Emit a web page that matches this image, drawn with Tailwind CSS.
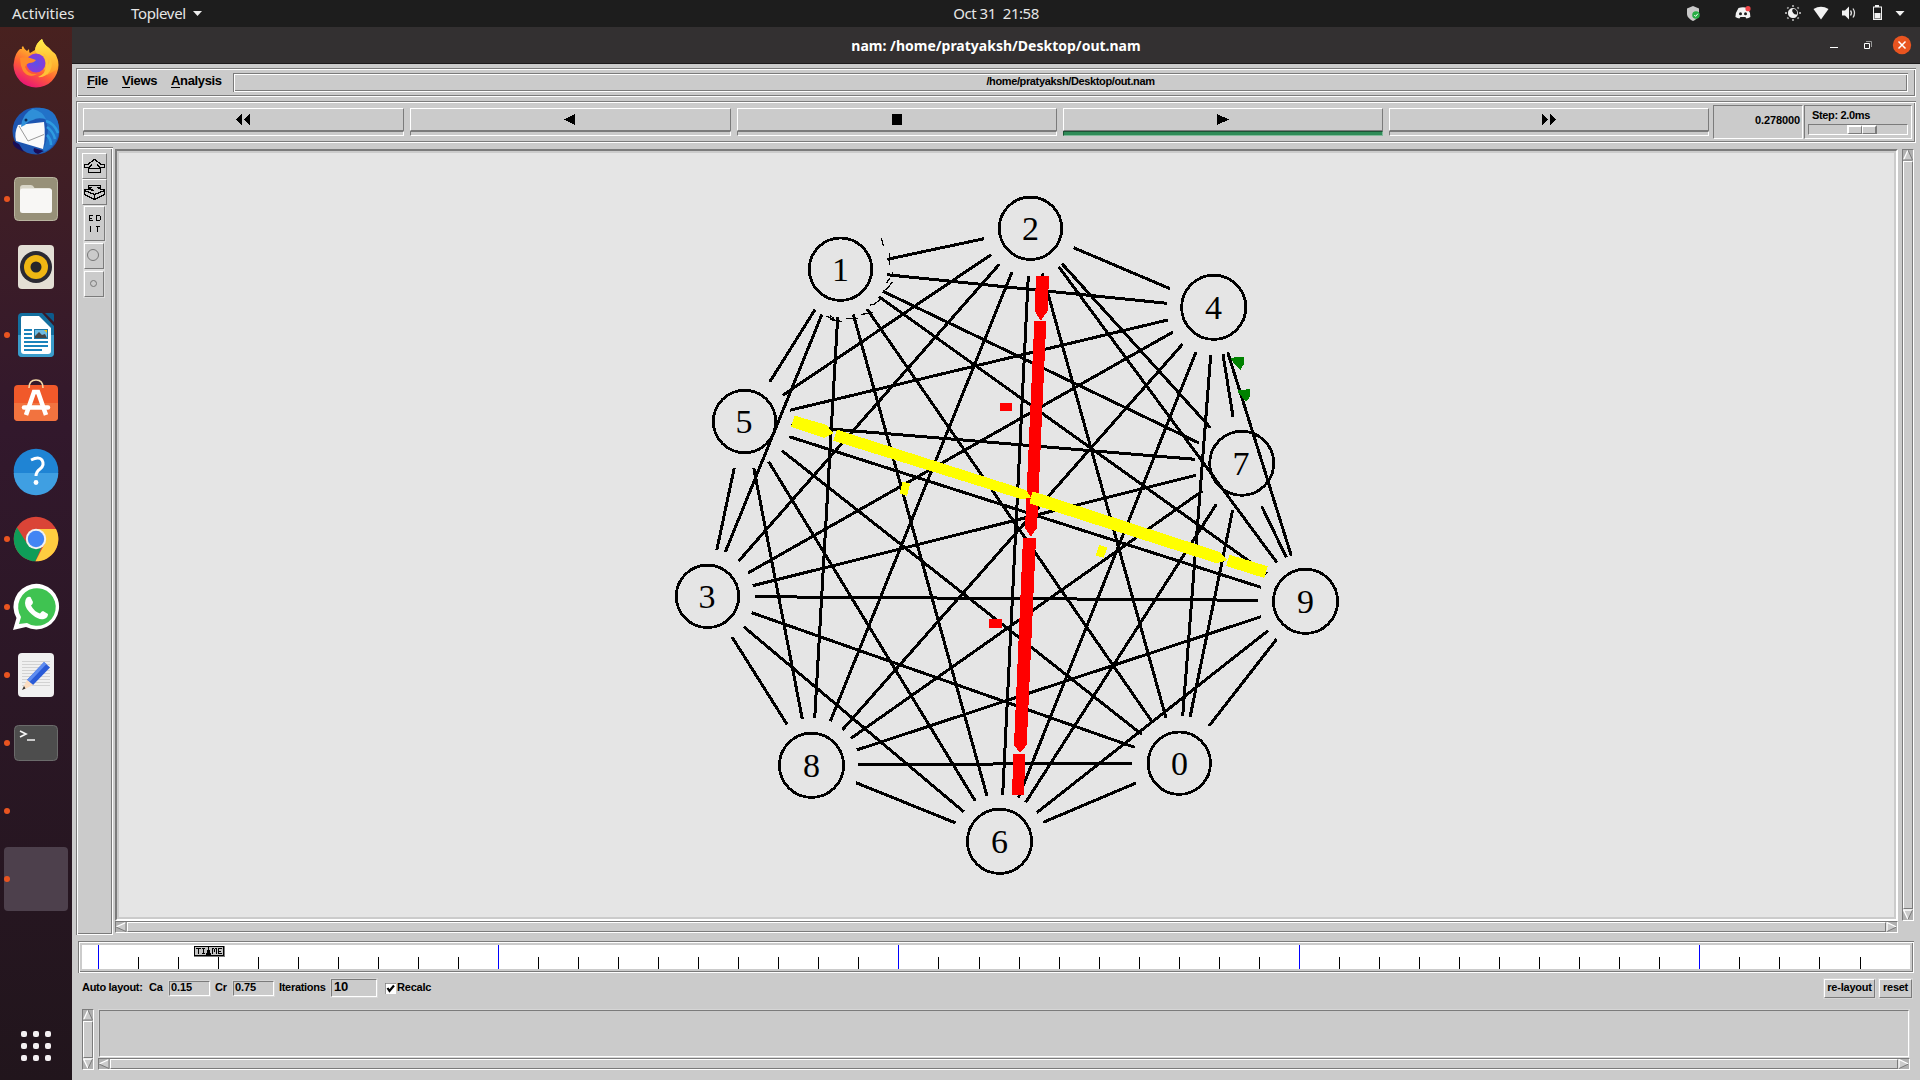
<!DOCTYPE html>
<html lang="en">
<head>
<meta charset="utf-8">
<title>nam</title>
<script src="https://cdn.jsdelivr.net/npm/@tailwindcss/browser@4"></script>
</head>
<body class="w-[1920px] h-[1080px] overflow-hidden bg-[#cbcbcb] flex flex-col font-['Liberation_Sans',Arial,sans-serif] text-black">

<!-- GNOME top bar -->
<header class="h-[27px] shrink-0 bg-[#1d1d1d] text-[#e6e6e6] font-['Noto_Sans',sans-serif] text-[15px] leading-[27px] grid grid-cols-3">
  <div class="flex pl-3">
    <span class="w-[119px]">Activities</span>
    <span class="tracking-[-0.35px] w-[62px]">Toplevel</span>
    <svg class="w-[10px] h-[27px]" viewBox="0 0 10 27"><path d="M0 11h9l-4.500 5z" fill="#eee"/></svg>
  </div>
  <div class="flex justify-center pl-[72px] whitespace-pre tracking-[-0.45px]">Oct 31  21:58</div>
  <svg class="w-[240px] h-[27px] justify-self-end" viewBox="1680 0 240 27" fill="#f2f2f2">
    <path d="M1693 6l6 2.500v5.500c0 3-3 5.500-6 7c-3-1.500-6-4-6-7V8.500z" fill="#c9c9c9"/>
    <circle cx="1696" cy="15" r="3.800" fill="#27ae45"/><path d="M1694.300 15l1.300 1.400l2.300-2.700" fill="none" stroke="#fff"/>
    <path d="M1738.500 8q4.500-1.600 9 0q3 4.500 2.900 9q-2 1.400-4 1.400l-1-1.400h-5l-1 1.400q-2 0-4-1.400q0-4.500 3.100-9z"/>
    <circle cx="1740.500" cy="13.700" r="1.500" fill="#1d1d1d"/><circle cx="1745.500" cy="13.700" r="1.500" fill="#1d1d1d"/><circle cx="1748" cy="8.700" r="2.600" fill="#ed4245"/>
    <g fill="none" stroke="#a5a5a5" stroke-width="1.800"><path d="M1793 5v2M1793 19v2M1785 13h2M1799 13h2M1787.300 7.300l1.200 1.200M1797.500 17.500l1.200 1.200M1798.700 7.300l-1.200 1.200M1787.300 18.700l1.200-1.200"/></g>
    <circle cx="1793" cy="13" r="4.600" fill="none" stroke="#ccc"/><path d="M1793 8.200a4.800 4.800 0 1 0 4.700 6a4 4 0 0 1-4.700-6z"/>
    <path d="M1813.500 9q7.500-4.500 15 0l-7.500 10.500z"/>
    <path d="M1842 10.500h3l4-4v13l-4-4h-3z"/><path d="M1850.500 10.500q2 2.500 0 5M1853 8.500q3 4.500 0 9" fill="none" stroke="#ddd" stroke-width="1.300"/>
    <path d="M1874.500 5h4v1.500h3v13.500h-9v-13.500h2z" transform="translate(.5 0)"/><path d="M1874 7.500h7v11h-7z" fill="#1d1d1d"/><path d="M1874.500 13h6v5h-6z"/>
    <path d="M1895.500 11h9l-4.500 5z"/>
  </svg>
</header>

<div class="flex flex-1 min-h-0">
  <!-- Dock -->
  <nav class="w-[72px] shrink-0 bg-linear-to-b from-[#48211f] via-[#32182c] via-38% to-[#21151c] flex flex-col gap-1 pt-1 px-1">
    <svg class="size-16" viewBox="0 0 64 64">
      <defs>
        <linearGradient id="ff" x1="0.800" y1="0" x2="0.300" y2="1"><stop offset="0" stop-color="#fff44f"/><stop offset=".35" stop-color="#ffb22b"/><stop offset=".65" stop-color="#ff5f35"/><stop offset="1" stop-color="#e8107a"/></linearGradient>
        <linearGradient id="ffy" x1="0" y1="0" x2="0" y2="1"><stop offset="0" stop-color="#fff04a"/><stop offset="1" stop-color="#ff9a26"/></linearGradient>
        <radialGradient id="ffp"><stop offset="0" stop-color="#5b50e8"/><stop offset="1" stop-color="#8a3bd8"/></radialGradient>
      </defs>
      <path d="M10 31q1-9 6-13l2 0q-1-2 1-3q1 3 4 5l2-2q0 3 1 4l5-3q1-7 7-11q2 6 7 9l3 4q4 1 4 5q3 4 2.500 8a22.500 22.500 0 0 1-45 0z" fill="url(#ff)"/>
      <path d="M31 19q1-7 7-11q2 6 7 9l7 7q4 8 0 15l-9 5z" fill="url(#ffy)"/>
      <circle cx="32" cy="32" r="9.500" fill="url(#ffp)"/>
      <path d="M16 27q7-2 16 2q-2 3-7 3q-3 1-4 4q3 8 12 7q-8 5-14-3q-3-6-3-13z" fill="#ff8a2a"/>
      <path d="M39 22q6 3 5 12q3-4 1-10q5 9 1 16q-5 7-12 6q8-3 8-12q0-8-3-12z" fill="#ffc238"/>
    </svg>
    <svg class="size-16" viewBox="0 0 64 64">
      <circle cx="32" cy="32" r="23.500" fill="#1d55b0"/>
      <path d="M27 10q16-4 24 6q7 12 2 24q-5 11-16 14q7-12 7-25q-2-10-9-14z" fill="#2272c8"/>
      <path d="M42 22q8 2 12 12M43 28q6 4 8 12M43 36q4 4 4 10" stroke="#2e9be0" stroke-width="2.500" fill="none"/>
      <path d="M9 42q-2 6 11 11l-5-8zM30 49q-2 4 4 6l6-3z" fill="#1a0d57"/>
      <path d="M14 26l26 -3q2 15-1 27l-27-8q-2-8 2-16z" fill="#fafafa"/>
      <path d="M15 27l9 15l16-6.500" fill="none" stroke="#999"/>
      <path d="M17 28q1-14 13-19l-1 1q9 2 13 10q-9-2-13 1q-5 1-8 5z" fill="#2f8fd8"/>
      <circle cx="22" cy="21" r="1.500" fill="#0b2c5c"/>
    </svg>
    <div class="relative size-16"><i class="absolute left-0 top-[29px] size-[6px] rounded-full bg-[#e95420]"></i>
      <svg class="size-16" viewBox="0 0 64 64"><rect x="10.500" y="10.500" width="43" height="43" rx="4" fill="#979078" stroke="#b9b5a0"/><path d="M16 21q0-3 3-3h8q2 0 3.500 3h14q3 0 3 3v3H16z" fill="#d9d6c8"/><rect x="16" y="21.500" width="32" height="24.500" rx="2.500" fill="#f8f7f5"/></svg></div>
    <svg class="size-16" viewBox="0 0 64 64"><rect x="14" y="10" width="36" height="44" rx="4" fill="#e3dfd5"/><circle cx="32" cy="32" r="16" fill="#2a2a33"/><circle cx="32" cy="32" r="12" fill="#efb713"/><circle cx="32" cy="32" r="5.500" fill="#26262a"/></svg>
    <div class="relative size-16"><i class="absolute left-0 top-[29px] size-[6px] rounded-full bg-[#e95420]"></i>
      <svg class="size-16" viewBox="0 0 64 64"><path d="M18 10h20l12 13v27q0 4-4 4H18q-4 0-4-4V14q0-4 4-4z" fill="#136f9f"/><path d="M14 32h36v18q0 4-4 4H18q-4 0-4-4z" fill="#3a9cca"/><path d="M18.500 13H35l12 12v23q0 3-3 3H20q-3 0-3-3V15q0-2 1.500-2z" fill="#fff"/><path d="M41 10h7q2 0 2 2v7z" fill="#0c5a8c"/>
      <path d="M20 27h8M20 31h8M20 35h8M20 39h24M20 43h24M20 47h18" stroke="#1a82bb" stroke-width="2"/><rect x="30" y="26" width="14" height="10" fill="#1a75a5"/><path d="M31 27h12v8H31z" fill="#6dbbe4"/><path d="M31 35v-2l4-4l3 3l3-1l2 4z" fill="#444"/><path d="M40 27h3v3z" fill="#f5c211"/></svg></div>
    <svg class="size-16" viewBox="0 0 64 64"><rect x="10" y="14" width="44" height="36" rx="4" fill="#f1592a"/><path d="M10 32h44v14q0 4-4 4H14q-4 0-4-4z" fill="#f2733f"/><path d="M25 17q0-8 7-8t7 8" fill="none" stroke="#f5d9a8" stroke-width="1.600"/><path d="M22 44l8-23h4l8 23" fill="none" stroke="#fff" stroke-width="4.500"/><path d="M20 36.500h24" stroke="#fff" stroke-width="4.500" stroke-linecap="round"/></svg>
    <svg class="size-16" viewBox="0 0 64 64"><circle cx="32" cy="32" r="22.300" fill="#1f84d4"/><path d="M9.700 34a22.300 22.300 0 0 0 44.600 0z" fill="#3f9fe2"/><path d="M27 21q8-4 11 0q3 5-2 9q-4 3-4 7" fill="none" stroke="#fff" stroke-width="3"/><circle cx="32" cy="43.500" r="2.400" fill="#fff"/></svg>
    <div class="relative size-16"><i class="absolute left-0 top-[29px] size-[6px] rounded-full bg-[#e95420]"></i>
      <svg class="size-16" viewBox="0 0 64 64"><circle cx="32" cy="32" r="22.300" fill="#da4437"/><path d="M13 20.500L23.300 37l8.700 5l5.500-2l-6 14.300A22.300 22.300 0 0 1 13 20.500z" fill="#0f9d58"/><path d="M32 22h20a22.300 22.300 0 0 1-20.500 32.300L41 36z" fill="#ffcd40"/><circle cx="32" cy="32" r="10.200" fill="#f1f1f1"/><circle cx="32" cy="32" r="8.200" fill="#4285f4"/></svg></div>
    <div class="relative size-16"><i class="absolute left-0 top-[29px] size-[6px] rounded-full bg-[#e95420]"></i>
      <svg class="size-16" viewBox="0 0 64 64"><path d="M9 55l3.500-12A22.800 22.800 0 1 1 22 52z" fill="#fff"/><path d="M15 49l2-7A18.800 18.800 0 1 1 23 48z" fill="#3fc351"/><path d="M22.500 23q2-2 4-1l2.500 5q0 2-2 3.500q3 6 9 8q1.500-2.500 3-2.500l5 3q0 4-4 5q-5 1.500-12-4.500t-7-11.500q0-3 1.500-5z" fill="#fff"/></svg></div>
    <div class="relative size-16"><i class="absolute left-0 top-[29px] size-[6px] rounded-full bg-[#e95420]"></i>
      <svg class="size-16" viewBox="0 0 64 64"><rect x="14" y="10" width="36" height="44" rx="4" fill="#f0f0f0"/><path d="M18 18.500h28M18 21.500h28M18 24.500h28M18 27.500h28M18 30.500h28M18 33.500h28M18 36.500h28M18 39.500h28M18 42.500h28" stroke="#d2d2d2"/><path d="M40 19l6 5.500L29 42l-6-5z" fill="#2a5bd7"/><path d="M40 19l2.500 2L25.500 39l-2.500-2z" fill="#5f8df0"/><path d="M23 37l6 5l-9 4.500l-1.500-1z" fill="#fbdcc0"/><path d="M20 43l1.500 2.500l-3.500 1.500z" fill="#333"/></svg></div>
    <div class="relative size-16"><i class="absolute left-0 top-[29px] size-[6px] rounded-full bg-[#e95420]"></i>
      <svg class="size-16" viewBox="0 0 64 64"><rect x="10.500" y="14.500" width="43" height="35" rx="4" fill="#4d4d4d" stroke="#6b6b6b"/><path d="M16 20l6 3l-6 3M23 29h8" fill="none" stroke="#f4f4f4" stroke-width="1.700"/></svg></div>
    <div class="relative size-16"><i class="absolute left-0 top-[29px] size-[6px] rounded-full bg-[#e95420]"></i></div>
    <div class="relative size-16 rounded-[4px] bg-[#4d404c]"><i class="absolute left-0 top-[29px] size-[6px] rounded-full bg-[#e95420]"></i></div>
    <div class="mt-auto mb-[19px] mx-auto grid grid-cols-3 gap-[6px]">
      <i class="size-[6px] rounded-[2px] bg-[#f4f0f2]"></i><i class="size-[6px] rounded-[2px] bg-[#f4f0f2]"></i><i class="size-[6px] rounded-[2px] bg-[#f4f0f2]"></i>
      <i class="size-[6px] rounded-[2px] bg-[#f4f0f2]"></i><i class="size-[6px] rounded-[2px] bg-[#f4f0f2]"></i><i class="size-[6px] rounded-[2px] bg-[#f4f0f2]"></i>
      <i class="size-[6px] rounded-[2px] bg-[#f4f0f2]"></i><i class="size-[6px] rounded-[2px] bg-[#f4f0f2]"></i><i class="size-[6px] rounded-[2px] bg-[#f4f0f2]"></i>
    </div>
  </nav>

  <main class="flex-1 min-w-0 flex flex-col">
    <!-- Title bar -->
    <div class="h-[37px] shrink-0 bg-[#333031] border-b border-[#1c1a1b] grid grid-cols-[1fr_auto_1fr] items-center">
      <span></span>
      <h1 class="pt-px font-['Noto_Sans',sans-serif] font-bold text-[14px] leading-[35px] text-white">nam: /home/pratyaksh/Desktop/out.nam</h1>
      <svg class="w-[100px] h-[36px] justify-self-end" viewBox="1820 27 100 36"><path d="M1830 47h8v1h-8z" fill="#fff"/><path d="M1866 41.500h5.500v5.500" fill="none" stroke="#999"/><path d="M1864.500 43.500h5v5h-5z" fill="none" stroke="#fff"/><circle cx="1902" cy="45" r="9.200" fill="#e95420"/><path d="M1898.500 41.500l7 7M1905.500 41.500l-7 7" stroke="#fff" stroke-width="1.500"/></svg>
    </div>

    <div class="flex-1 min-h-0 flex flex-col pt-1">
      <!-- Menu bar -->
      <div class="ml-1 mr-1 h-[29px] shrink-0 flex items-start pt-[5px] pr-2 shadow-[inset_1px_1px_#7b7b7b,inset_-1px_-1px_#fff,inset_2px_2px_#fff,inset_-2px_-2px_#7b7b7b]">
        <div class="flex w-[157px] pl-[11px] font-bold text-[13px] leading-[15px] tracking-[-0.35px]">
          <span class="w-[35px]"><span class="inline-block h-[15px] border-b border-black">F</span>ile</span>
          <span class="w-[49px]"><span class="inline-block h-[15px] border-b border-black">V</span>iews</span>
          <span><span class="inline-block h-[15px] border-b border-black">A</span>nalysis</span>
        </div>
        <div class="flex-1 h-[19px] text-center font-bold text-[11px] leading-[17px] tracking-[-0.37px] shadow-[inset_1px_1px_#7b7b7b,inset_-1px_-1px_#fff,inset_2px_2px_#fff,inset_-2px_-2px_#7b7b7b]">/home/pratyaksh/Desktop/out.nam</div>
      </div>

      <!-- Playback toolbar -->
      <div class="mt-1 mx-1 h-[42px] shrink-0 flex pt-1 pl-[7px] pr-1 shadow-[inset_1px_1px_#7b7b7b,inset_-1px_-1px_#fff,inset_2px_2px_#fff,inset_-2px_-2px_#7b7b7b]">
        <div class="flex gap-[6px] pt-[3px]">
          <div class="w-[321px]"><button class="flex w-full h-[23px] items-center justify-center pr-px border border-t-white border-l-white border-r-[#7b7b7b] border-b-[#7b7b7b]"><svg class="w-[14px] h-[11px]" viewBox="0 0 14 11" shape-rendering="crispEdges"><path d="M6 0v11L0 5.500zM14 0v11L8 5.500z"/></svg></button><div class="h-[5px] border border-t-[#7b7b7b] border-l-[#7b7b7b] border-r-white border-b-white"></div></div>
          <div class="w-[321px]"><button class="flex w-full h-[23px] items-center justify-center pr-[2px] border border-t-white border-l-white border-r-[#7b7b7b] border-b-[#7b7b7b]"><svg class="w-[11px] h-[11px]" viewBox="0 0 11 11" shape-rendering="crispEdges"><path d="M11 0v11L0 5.500z"/></svg></button><div class="h-[5px] border border-t-[#7b7b7b] border-l-[#7b7b7b] border-r-white border-b-white"></div></div>
          <div class="w-[320px]"><button class="flex w-full h-[23px] items-center justify-center border border-t-white border-l-white border-r-[#7b7b7b] border-b-[#7b7b7b]"><svg class="w-[10px] h-[11px]" viewBox="0 0 10 11"><path d="M0 0h10v11H0z"/></svg></button><div class="h-[5px] border border-t-[#7b7b7b] border-l-[#7b7b7b] border-r-white border-b-white"></div></div>
          <div class="w-[320px]"><button class="flex w-full h-[23px] items-center justify-center border border-t-white border-l-white border-r-[#7b7b7b] border-b-[#7b7b7b]"><svg class="w-[12px] h-[11px]" viewBox="0 0 12 11" shape-rendering="crispEdges"><path d="M0 0v11L12 5.500z"/></svg></button><div class="h-[5px] bg-[#2e8b57] border border-t-[#1b5334] border-l-[#1b5334] border-r-[#82b99a] border-b-[#82b99a]"></div></div>
          <div class="w-[320px]"><button class="flex w-full h-[23px] items-center justify-center border border-t-white border-l-white border-r-[#7b7b7b] border-b-[#7b7b7b]"><svg class="w-[14px] h-[11px]" viewBox="0 0 14 11" shape-rendering="crispEdges"><path d="M0 0v11L6 5.500zM8 0v11L14 5.500z"/></svg></button><div class="h-[5px] border border-t-[#7b7b7b] border-l-[#7b7b7b] border-r-white border-b-white"></div></div>
        </div>
        <div class="ml-1 w-[90px] h-[34px] border border-t-[#7b7b7b] border-l-[#7b7b7b] border-r-white border-b-white text-right pr-[2px] font-bold text-[11px] leading-[28px] tracking-[-0.1px]">0.278000</div>
        <div class="ml-px w-[108px] h-[34px] border border-t-[#7b7b7b] border-l-[#7b7b7b] border-r-white border-b-white px-[3px] pt-[3px]">
          <div class="h-[15px] pl-1 font-bold text-[11px] leading-[13px] tracking-[-0.35px]">Step: 2.0ms</div>
          <div class="h-[11px] border border-t-[#7b7b7b] border-l-[#7b7b7b] border-r-white border-b-white pl-[38px] flex">
            <i class="w-[15px] h-[9px] border border-t-2 border-l-2 border-t-white border-l-white border-r-[#7b7b7b] border-b-[#7b7b7b]"></i><i class="w-[15px] h-[9px] border border-t-2 border-t-white border-l-white border-r-2 border-r-[#7b7b7b] border-b-[#7b7b7b]"></i>
          </div>
        </div>
      </div>

      <!-- Tool strip, canvas and its scrollbars -->
      <div class="mt-1 ml-1 h-[788px] shrink-0 flex">
        <div class="w-[37px] pt-[6px] pl-[6px] flex flex-col shadow-[inset_1px_1px_#7b7b7b,inset_-1px_-1px_#fff,inset_2px_2px_#fff,inset_-2px_-2px_#7b7b7b]">
          <button class="w-[25px] h-[26px] border border-t-white border-l-white border-r-[#7b7b7b] border-b-[#7b7b7b]"><svg class="w-[23px] h-[24px]" viewBox="0 0 23 24" fill="none" stroke="#000" stroke-width="1.200" shape-rendering="crispEdges"><path d="M11.500 5.500L4.500 10.500H1.500v3h5l2-3M11.500 5.500l7 5h3v3h-5l-2-3M8.500 10.500l-3 4h12l-3-4M5.500 14.500v4h12v-4"/></svg></button>
          <button class="w-[25px] h-[26px] border border-t-white border-l-white border-r-[#7b7b7b] border-b-[#7b7b7b]"><svg class="w-[23px] h-[24px]" viewBox="0 0 23 24" fill="none" stroke="#000" stroke-width="1.200" shape-rendering="crispEdges"><path d="M5.500 5.500h12v2h-2l3 2h3v5l-10 5l-10-5v-5h3l3-2h-2zM1.500 10.500l10 4l10-4M11.500 14.500v5M7.500 7.500l-1 2l5 1M15.500 7.500l1 2"/></svg></button>
          <button class="mt-px ml-[2px] w-[21px] h-[35px] border border-t-white border-l-white border-r-[#7b7b7b] border-b-[#7b7b7b] outline outline-[#dcdcdc]"><svg class="w-[19px] h-[33px]" viewBox="0 0 19 33" fill="none" stroke="#000" shape-rendering="crispEdges"><path d="M8 8.500H4.500v5H8M4.500 11H7M11.500 8.500h3l1 1v3l-1 1h-3zM5.500 19v6M11 19.500h4M12.500 19v6"/></svg></button>
          <button class="mt-[2px] ml-[2px] w-[20px] h-[26px] border border-t-white border-l-white border-r-[#7b7b7b] border-b-[#7b7b7b] outline outline-[#dcdcdc]"><svg class="w-[18px] h-[24px]" viewBox="0 0 18 24"><circle cx="8" cy="11" r="5.500" fill="none" stroke="#777"/></svg></button>
          <button class="mt-[2px] ml-[2px] w-[20px] h-[26px] border border-t-white border-l-white border-r-[#7b7b7b] border-b-[#7b7b7b] outline outline-[#dcdcdc]"><svg class="w-[18px] h-[24px]" viewBox="0 0 18 24"><circle cx="8.500" cy="11.500" r="3" fill="none" stroke="#777"/></svg></button>
        </div>
        <div class="ml-[2px] mt-[2px] w-[1783px]">
          <div class="h-[772px] border-2 border-t-[#7b7b7b] border-l-[#7b7b7b] border-r-white border-b-white p-[2px]">
            <svg class="block w-[1775px] h-[764px] bg-[#e5e5e5]" viewBox="119 153 1775 764">
              <g stroke="#000" stroke-width="3" shape-rendering="crispEdges" fill="none">
                <path d="M887.300 259.300L984 238.700M886.700 274.700L1167 303.300M883 291.300L1199 443M879 296.700L1266.700 573.700M867 309L1152.700 722.700M853.300 314.300L987 796M837.700 317L814.700 718.300M822 314.300L725.300 552M815 309.700L769.700 382"/>
                <path d="M991 254.700L782.700 395.300M999.300 264.300L738.700 561M1012 272L830.300 721.300M1028.300 276L1002.700 794.700M1042.300 273.300L1166 717.700M1058.700 266.700L1277 562.700M1062 263.700L1210.300 427.700M1073.700 247.700L1170 288.700"/>
                <path d="M1167.700 320L789.700 410.300M1173 332L748 573M1182.700 344L842.300 730M1196 352L1018.300 797.700M1210.700 355L1182.700 716.300M1223 354.300L1233 416.700M1227.700 352.300L1291.300 555.700"/>
                <path d="M790.700 425.700L1195 459.300M789.300 436.700L1261 587.300M782 450.700L1141.700 734.300M768.700 461.700L975.300 801M753.700 467.700L802.300 719M734.300 467.700L716.700 550.300"/>
                <path d="M1196 475.300L752.700 585.700M1202.300 491L851 738.300M1216.300 504.300L1025.700 802.300M1232.700 510L1190 717.300M1261.700 506.300L1286.300 557.300"/>
                <path d="M754.700 596.700L1258.300 600.300M751.700 612.700L1134.700 747.300M743.700 626.700L963.700 811.700M732 637L787 724.300M1261 616.700L856.700 750M1268 630.700L1036.700 812.700M1276.700 639L1209 726M858.300 764.700L1132 763.300M856 782.700L955.700 823M1136 783L1043.300 822.300"/>
              </g>
              <g stroke="#000" stroke-width="2.800" shape-rendering="crispEdges" fill="none">
                <circle cx="1030.500" cy="228.300" r="31.200"/><circle cx="840.500" cy="269.200" r="31.200"/><circle cx="1213.700" cy="307.300" r="32.100"/><circle cx="744.500" cy="421.500" r="31.200"/><circle cx="1241.700" cy="463.300" r="32"/>
                <circle cx="707.500" cy="596.300" r="31.200"/><circle cx="1305.500" cy="601.300" r="32.100"/><circle cx="811.500" cy="765.300" r="32.100"/><circle cx="1179.300" cy="763.200" r="31.200"/><circle cx="999.500" cy="841.300" r="32.100"/>
              </g>
              <path d="M881.500 238.500l2 8M889.500 252.500v12M892.500 271.500v5M890 278l-3.500 5M892.500 282l-7 8.500M883 297l-9 7.500l-4 .5M873 312.500l-12 2M858 318.500h-12M842 321.500l-12-2M836 320.500l-10-4.500M834 318.500l-4-3" fill="none" stroke="#000" stroke-width="1.300" shape-rendering="crispEdges"/>
              <g fill="#f00" shape-rendering="crispEdges">
                <path d="M1036 276H1049L1047.700 311L1040.700 320.700L1034.700 311zM1034.300 321H1046.300L1037 528L1030.700 536.700L1025 528zM1023 538H1036L1026.700 745L1020 752.700L1014 745zM1013.300 754H1025.300L1024 795H1012zM1000 403h12v8h-12zM989 619h13v9h-13z"/>
              </g>
              <g fill="#ff0" shape-rendering="crispEdges">
                <path d="M794.700 415.700L826 424.700L833.700 433.300L824.300 438L791 427zM837 429.700L1026 490L1031 497.700L1021.700 499.300L833.300 440.700zM1032.700 491.300L1219 551.700L1227.700 560L1216.700 563.300L1029.300 503.300zM1229.300 554.700L1267.700 566.300L1264.300 578L1226.300 566zM902.700 481.300L910 484L907 495.700L899.700 493.300zM1099.300 545L1107.300 547.700L1103.700 557.700L1095.700 555.700z"/>
              </g>
              <path d="M1230 358.700L1235.300 357L1244 357L1244.300 363.300L1240.300 370zM1237 390.700L1250 389V396.700L1246 402z" fill="#008200" shape-rendering="crispEdges"/>
              <g class="font-['Liberation_Serif',serif] text-[34px]" text-anchor="middle">
                <text x="1030.500" y="240">2</text><text x="840.500" y="281">1</text><text x="1213.500" y="319">4</text><text x="744" y="433">5</text><text x="1241" y="475">7</text>
                <text x="707" y="608">3</text><text x="1305.500" y="613">9</text><text x="811.500" y="777">8</text><text x="1179.500" y="775">0</text><text x="999.500" y="853">6</text>
              </g>
            </svg>
          </div>
          <div class="h-3 flex bg-[#b0b0b0] border border-t-[#7b7b7b] border-l-[#7b7b7b] border-r-white border-b-white">
            <svg class="w-[11px] h-[10px]" viewBox="0 0 11 10"><path d="M0 5L10.500 .5v9z" fill="#cbcbcb"/><path d="M0 5L10 .5" stroke="#fff" stroke-width="1.300"/><path d="M0 5l10 4.500V0" fill="none" stroke="#7b7b7b"/></svg>
            <i class="flex-1 bg-[#cbcbcb] border border-t-white border-l-white border-r-[#7b7b7b] border-b-[#7b7b7b]"></i>
            <svg class="w-[11px] h-[10px]" viewBox="0 0 11 10"><path d="M1 .5v9L10.500 5z" fill="#cbcbcb"/><path d="M1 9.500V.5L10.500 5" fill="none" stroke="#fff" stroke-width="1.300"/><path d="M1 9.500L10.500 5" stroke="#7b7b7b"/></svg>
          </div>
        </div>
        <div class="ml-1 mt-[2px] w-3 h-[772px] flex flex-col bg-[#b0b0b0] border border-t-[#7b7b7b] border-l-[#7b7b7b] border-r-white border-b-white">
          <svg class="w-[10px] h-[11px]" viewBox="0 0 10 11"><path d="M5 0L.5 10h9z" fill="#cbcbcb"/><path d="M5 0L.5 10" stroke="#fff" stroke-width="1.300"/><path d="M5 0l4.500 10H0" fill="none" stroke="#7b7b7b"/></svg>
          <i class="flex-1 bg-[#cbcbcb] border border-t-white border-l-white border-r-[#7b7b7b] border-b-[#7b7b7b]"></i>
          <svg class="w-[10px] h-[11px]" viewBox="0 0 10 11"><path d="M.5 1h9L5 10.500z" fill="#cbcbcb"/><path d="M9.500 1H.5L5 10.500" fill="none" stroke="#fff" stroke-width="1.300"/><path d="M9.500 1L5 10.500" stroke="#7b7b7b"/></svg>
        </div>
      </div>

      <!-- Time slider -->
      <div class="mt-[6px] ml-[6px] w-[1836px] h-8 shrink-0 p-1 shadow-[inset_1px_1px_#7b7b7b,inset_-1px_-1px_#fff,inset_2px_2px_#fff,inset_-2px_-2px_#7b7b7b]">
        <svg id="timeline" class="block w-[1828px] h-6 bg-white" viewBox="82 945 1828 24" shape-rendering="crispEdges">
          <g id="ticks"></g>
          <path d="M194 946h31v11h-31z" fill="#7b7b7b"/><path d="M194 946h30v10h-30z"/><path d="M195 947h28v8h-28z" fill="#c4c4c4"/>
          <path d="M196 948.500h5M198.500 948v6M202 948.500h3M203.500 948v6M202 953.500h3M212.500 954v-6M213 948.500h1M214.500 949v3M215 948.500h1M216.500 948v6M222 948.500h-3.500v5H222M218 951h3" fill="none" stroke="#000"/>
          <path d="M208 946h1v4h1v3h1v3h-5v-3h1v-3h1z"/>
        </svg>
      </div>

      <!-- Auto layout controls -->
      <div class="mt-[6px] h-5 ml-[10px] mr-2 shrink-0 flex items-start font-bold text-[11px] leading-[17px] tracking-[-0.3px]">
        <span class="w-[67px]">Auto layout:</span>
        <span class="w-5">Ca</span>
        <span class="mt-[2px] w-[41px] h-[15px] pl-px leading-[11px] tracking-[-0.1px] border border-t-[#7b7b7b] border-l-[#7b7b7b] border-r-white border-b-white outline outline-[#d6d6d6]">0.15</span>
        <span class="ml-[5px] w-[18px]">Cr</span>
        <span class="mt-[2px] w-[41px] h-[15px] pl-px leading-[11px] tracking-[-0.1px] border border-t-[#7b7b7b] border-l-[#7b7b7b] border-r-white border-b-white outline outline-[#d6d6d6]">0.75</span>
        <span class="ml-[5px] w-[52px]">Iterations</span>
        <span class="w-[46px] h-[18px] pl-[2px] text-[13px] leading-[14px] tracking-[-0.3px] border border-t-[#7b7b7b] border-l-[#7b7b7b] border-r-white border-b-white outline outline-[#d6d6d6]">10</span>
        <svg class="ml-2 mt-1 w-[11px] h-[11px]" viewBox="0 0 11 11"><path d="M0 0h11v11H0z" fill="#fff"/><path d="M0 11V0h11" fill="none" stroke="#7b7b7b" stroke-width="1.500"/><path d="M2.500 5l2 3L9 2.500" fill="none" stroke="#000" stroke-width="2.200"/></svg>
        <span class="ml-px tracking-[-0.2px]">Recalc</span>
        <button class="ml-auto h-[19px] w-[51px] leading-[14px] pb-[3px] font-bold text-center tracking-[-0.2px] border border-t-white border-l-white border-r-[#7b7b7b] border-b-[#7b7b7b] outline outline-[#d6d6d6]">re-layout</button>
        <button class="ml-1 h-[19px] w-[33px] leading-[14px] pb-[3px] font-bold text-center border border-t-white border-l-white border-r-[#7b7b7b] border-b-[#7b7b7b] outline outline-[#d6d6d6]">reset</button>
      </div>

      <!-- Annotation list -->
      <div class="mt-[10px] ml-[10px] mr-[10px] h-[61px] shrink-0 flex">
        <div class="w-3 flex flex-col bg-[#b0b0b0] border border-t-[#7b7b7b] border-l-[#7b7b7b] border-r-white border-b-white">
          <svg class="w-[10px] h-[11px]" viewBox="0 0 10 11"><path d="M5 0L.5 10h9z" fill="#cbcbcb"/><path d="M5 0L.5 10" stroke="#fff" stroke-width="1.300"/><path d="M5 0l4.500 10H0" fill="none" stroke="#7b7b7b"/></svg>
          <i class="flex-1 bg-[#cbcbcb] border border-t-white border-l-white border-r-[#7b7b7b] border-b-[#7b7b7b]"></i>
          <svg class="w-[10px] h-[11px]" viewBox="0 0 10 11"><path d="M.5 1h9L5 10.500z" fill="#cbcbcb"/><path d="M9.500 1H.5L5 10.500" fill="none" stroke="#fff" stroke-width="1.300"/><path d="M9.500 1L5 10.500" stroke="#7b7b7b"/></svg>
        </div>
        <div class="ml-1 flex-1 flex flex-col pt-px">
          <div class="mx-px h-[47px] border border-t-[#7b7b7b] border-l-[#7b7b7b] border-r-white border-b-white outline outline-[#d6d6d6]"></div>
          <div class="mt-px h-3 flex bg-[#b0b0b0] border border-t-[#7b7b7b] border-l-[#7b7b7b] border-r-white border-b-white">
            <svg class="w-[11px] h-[10px]" viewBox="0 0 11 10"><path d="M0 5L10.500 .5v9z" fill="#cbcbcb"/><path d="M0 5L10 .5" stroke="#fff" stroke-width="1.300"/><path d="M0 5l10 4.500V0" fill="none" stroke="#7b7b7b"/></svg>
            <i class="flex-1 bg-[#cbcbcb] border border-t-white border-l-white border-r-[#7b7b7b] border-b-[#7b7b7b]"></i>
            <svg class="w-[11px] h-[10px]" viewBox="0 0 11 10"><path d="M1 .5v9L10.500 5z" fill="#cbcbcb"/><path d="M1 9.500V.5L10.500 5" fill="none" stroke="#fff" stroke-width="1.300"/><path d="M1 9.500L10.500 5" stroke="#7b7b7b"/></svg>
          </div>
        </div>
      </div>
    </div>
  </main>
</div>

<script>
  // Minor ticks every unit, major (blue) ticks every ten
  const ticks = document.getElementById('ticks');
  for (let i = 0; i <= 44; i++) {
    const r = document.createElementNS('http://www.w3.org/2000/svg', 'rect');
    const major = i % 10 === 0;
    r.setAttribute('x', Math.floor(98 + i * 40.0455));
    r.setAttribute('y', major ? 945 : 957);
    r.setAttribute('width', 1);
    r.setAttribute('height', major ? 24 : 12);
    r.setAttribute('fill', major ? '#0000ff' : '#000');
    ticks.appendChild(r);
  }
</script>
</body>
</html>
